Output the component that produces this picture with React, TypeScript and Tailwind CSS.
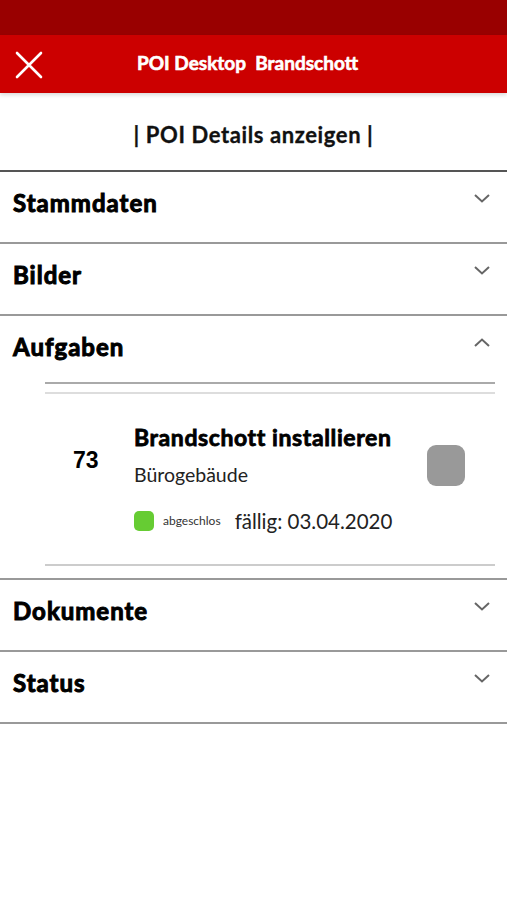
import React from 'react';

const Chevron = ({ up }: { up?: boolean }) => (
  <svg width="16" height="9" viewBox="0 0 16 9" className="text-[#666]">
    <path
      d={up ? 'M1 8 L8 1.5 L15 8' : 'M1 1 L8 7.5 L15 1'}
      fill="none"
      stroke="currentColor"
      strokeWidth="2"
    />
  </svg>
);

const Section = ({ title, open, short }: { title: string; open?: boolean; short?: boolean }) => (
  <div className={`flex items-center justify-between pl-[13px] pr-[17px] ${short ? 'h-[66px] pb-[4px]' : 'h-[70px] pb-[8px]'}`}>
    <span className="text-[24px] font-bold tracking-[1px] text-black [-webkit-text-stroke:1px]">
      {title}
    </span>
    <div className="-mt-[10px]">
      <Chevron up={open} />
    </div>
  </div>
);

export default function App() {
  return (
    <div className="min-h-[900px] bg-white font-['Lato',sans-serif]">
      <div className="h-[35px] bg-[#990000]" />
      <header className="relative flex h-[58px] items-center justify-center bg-[#cc0000] shadow-[0_2px_4px_rgba(0,0,0,0.15)]">
        <svg width="28" height="28" viewBox="0 0 28 28" className="absolute left-[15px] top-[16px]">
          <path d="M2 2 L26 26 M26 2 L2 26" stroke="white" strokeWidth="2.6" strokeLinecap="round" />
        </svg>
        <h1 className="-ml-[12px] -mt-[1px] text-[19px] font-bold text-white [-webkit-text-stroke:0.6px]">
          POI Desktop&nbsp; Brandschott
        </h1>
      </header>

      <div className="flex h-[79px] items-center justify-center border-b-2 border-[#555]">
        <span className="mt-[6px] text-[22px] font-bold tracking-[0.6px] text-[#111] [-webkit-text-stroke:0.3px]">
          | POI Details anzeigen |
        </span>
      </div>

      <div className="border-b-2 border-[#999]">
        <Section title="Stammdaten" />
      </div>
      <div className="border-b-2 border-[#999]">
        <Section title="Bilder" />
      </div>
      <div className="border-b-2 border-[#999]">
        <Section title="Aufgaben" open short />
        <div className="ml-[45px] mr-[12px]">
          <div className="h-[2px] bg-[#aaa]" />
          <div className="mt-[8px] h-[2px] bg-[#ddd]" />
          <div className="h-[170px] pt-[30px]">
            <div className="flex items-start">
              <div className="mt-[24px] w-[89px] pl-[28px] font-['Liberation_Sans',sans-serif] text-[23px] font-bold leading-[24px] text-black">
                73
              </div>
              <div className="flex-1">
                <div className="text-[23px] font-bold leading-[26px] tracking-[0.6px] text-black [-webkit-text-stroke:0.8px]">
                  Brandschott installieren
                </div>
                <div className="mt-[13px] text-[19.5px] leading-[24px] text-[#222]">Bürogebäude</div>
              </div>
              <div className="mr-[30px] mt-[21px] h-[41px] w-[38px] rounded-[9px] bg-[#999]" />
            </div>
            <div className="ml-[89px] mt-[22px] flex h-[24px] items-center">
              <span className="h-[20px] w-[20px] rounded-[5px] bg-[#66cc33]" />
              <span className="ml-[9px] text-[12px] text-[#333]">abgeschlos</span>
              <span className="ml-[14px] text-[20.5px] text-[#222]">fällig: 03.04.2020</span>
            </div>
          </div>
          <div className="h-[2px] bg-[#ccc]" />
        </div>
        <div className="h-[12px]" />
      </div>
      <div className="border-b-2 border-[#999]">
        <Section title="Dokumente" />
      </div>
      <div className="border-b-2 border-[#999]">
        <Section title="Status" />
      </div>
    </div>
  );
}
